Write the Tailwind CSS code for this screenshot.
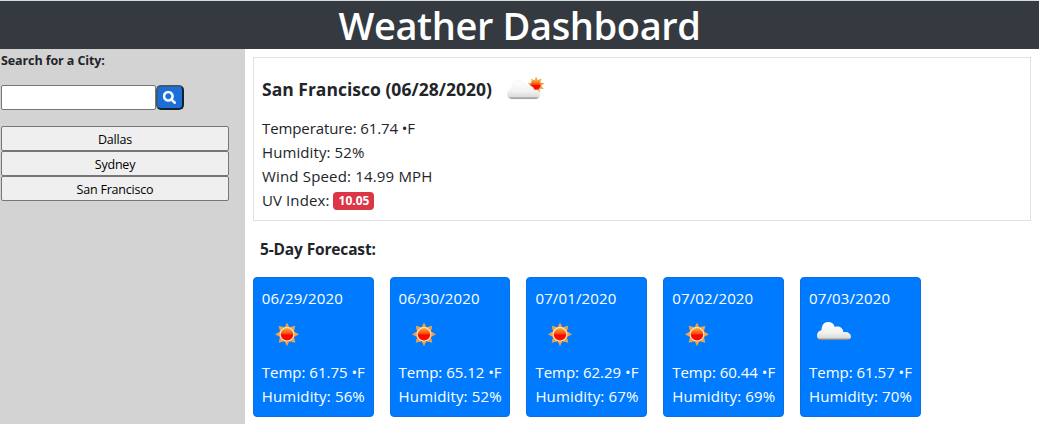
<!DOCTYPE html>
<html lang="en">
<head>
<meta charset="utf-8">
<title>Weather Dashboard</title>
<script src="https://cdn.jsdelivr.net/npm/@tailwindcss/browser@4"></script>
</head>
<body class="h-[432px] overflow-hidden bg-white font-['Open_Sans','Noto_Sans',sans-serif] text-[15px] leading-6 text-[#212529]">
<svg class="absolute size-0">
  <defs>
    <linearGradient id="cloudFill" x1="0" y1="0" x2="0" y2="1"><stop offset="0" stop-color="#fff"/><stop offset=".6" stop-color="#f1f1f1"/><stop offset=".87" stop-color="#dcdcdc"/><stop offset="1" stop-color="#777"/></linearGradient>
    <linearGradient id="sunFill" x1="0" y1="0" x2="0" y2="1"><stop offset="0" stop-color="#ffab36"/><stop offset=".45" stop-color="#fa4a0c"/><stop offset=".55" stop-color="#f50800"/><stop offset="1" stop-color="#ff1000"/></linearGradient>
    <symbol id="sun" viewBox="0 0 50 50">
      <path fill="#eea444" d="M25 12.500l2.300 4.800 6-1.600-1.300 5.900 5 2.600-5 2.800 1.300 5.800-6-1.500L25 36.300l-2.300-5-6 1.500 1.300-5.800-5-2.800 5-2.600-1.300-5.900 6 1.600z"/>
      <circle cx="25" cy="24.300" r="7.300" fill="#ffe9d0"/><circle cx="25" cy="24.300" r="6.200" fill="url(#sunFill)"/>
    </symbol>
    <symbol id="cloud" viewBox="0 0 50 50">
      <path fill="url(#cloudFill)" d="M11.500 30C9 29.500 7.800 27.500 8 25.200 8.200 22.500 10 20.500 12.500 20.300 12.500 15.500 15 12 19.200 12 22.500 12 24.800 13.700 25.800 17 29.500 15.500 34 17.500 34.500 22.200 38 21 42 23.500 42 26.500 42 28.500 40.500 30 38.500 30z"/>
    </symbol>
  </defs>
</svg>
<header class="flex h-[49px] items-center justify-center border-t border-[#d3dce0] bg-[#343a40]">
  <h1 class="text-[38px] leading-[48px] font-semibold tracking-[-0.380px] whitespace-nowrap text-white">Weather Dashboard</h1>
</header>
<div class="flex">
  <aside class="h-[375px] w-[245px] shrink-0 bg-[#d3d3d3] pl-px text-[12.5px]">
    <h2 class="h-[36px] pt-[2px] leading-[20px] font-bold tracking-[-0.1px]">Search for a City:</h2>
    <form class="flex h-[25px]">
      <input class="h-[25px] w-[155px] rounded-[2px] border border-[#767676] bg-white" aria-label="City">
      <button type="button" aria-label="Search" class="flex h-[25px] w-[28px] items-center justify-center rounded-[5px] border-2 border-[#14212e] border-t-[#3d5a79] border-l-[#3d5a79] bg-[#1d6fd8]">
        <svg viewBox="0 0 512 512" class="mr-px size-[13px] fill-white stroke-white stroke-[20]"><path d="M505 442.700 405.300 343c-4.500-4.500-10.600-7-17-7H372c27.600-35.300 44-79.700 44-128C416 93.100 322.900 0 208 0S0 93.100 0 208s93.100 208 208 208c48.300 0 92.700-16.400 128-44v16.300c0 6.400 2.500 12.500 7 17l99.700 99.700c9.400 9.400 24.600 9.400 33.900 0l28.300-28.300c9.400-9.400 9.400-24.600.1-34zM208 336c-70.700 0-128-57.200-128-128 0-70.700 57.200-128 128-128 70.700 0 128 57.200 128 128 0 70.700-57.200 128-128 128z"/></svg>
      </button>
    </form>
    <div class="mt-4 flex w-[228px] flex-col text-black tracking-[-0.2px]">
      <button class="h-[25px] rounded-[2px] border border-[#767676] bg-[#efefef] pt-px">Dallas</button>
      <button class="h-[25px] rounded-[2px] border border-[#767676] bg-[#efefef] pt-px">Sydney</button>
      <button class="h-[25px] rounded-[2px] border border-[#767676] bg-[#efefef] pt-px">San Francisco</button>
    </div>
  </aside>
  <main class="flex-1 px-2 pt-2">
    <section class="h-[164px] border border-[#dee2e6] px-2 pt-[7px]">
      <div class="flex h-[51px] items-center gap-2">
        <h3 class="pb-[3px] text-[17.500px] font-bold tracking-[0.010px] whitespace-nowrap">San Francisco (06/28/2020)</h3>
        <svg class="size-[50px] shrink-0" viewBox="0 0 50 50">
          <path fill="#f2a33c" d="M36 10.500l1.700 3.700 3.800-1.700-1.200 4 4.200.8-3.300 2.500 2.600 3.200-4.100-.2.100 4.100-3.100-2.700-2.700 3.200-1.200-4-4 .3 2.300-3.500-3.200-2.600 4-.8-.8-4 3.600 1.800z"/>
          <circle cx="35.500" cy="19" r="5" fill="url(#sunFill)"/>
          <path fill="url(#cloudFill)" stroke="#ececec" stroke-width=".5" d="M11.500 33C9 32.800 7.200 31 7.200 28.500 7.200 25.500 9 23.300 11.500 23 11.700 18 14.500 14.500 19 14.500 22.700 14.500 25.500 16.500 26.800 20 30.500 19 33.500 20.500 34.300 24 37.500 23.500 40 25.500 40 28.700 40 31.200 38.300 33 35.500 33z"/>
        </svg>
      </div>
      <div>
        <p class="tracking-[-0.1px]">Temperature: 61.74 •F</p>
        <p class="tracking-[0.1px]">Humidity: 52%</p>
        <p class="tracking-[0.170px]">Wind Speed: 14.99 MPH</p>
        <p class="flex items-center tracking-[0.1px]">UV Index:<span class="mt-px ml-1 flex h-[18px] w-[41px] items-center justify-center rounded-[4px] bg-[#dc3545] text-[12px] leading-[18px] font-bold tracking-normal text-white">10.05</span></p>
      </div>
    </section>
    <h3 class="flex h-14 items-center pl-[7px] text-[15.500px] font-bold tracking-[-0.150px]">5-Day Forecast:</h3>
    <section class="-ml-[0.2px] flex gap-4 tracking-[0.150px] whitespace-nowrap text-white">
      <article class="h-[140px] w-[120.800px] rounded-[4px] border border-[#0870e3] bg-[#007bff] p-2"><p>06/29/2020</p><svg class="size-[50px]"><use href="#sun"/></svg><p class="tracking-[-0.010px]">Temp: 61.75 •F</p><p>Humidity: 56%</p></article>
      <article class="h-[140px] w-[120.800px] rounded-[4px] border border-[#0870e3] bg-[#007bff] p-2"><p>06/30/2020</p><svg class="size-[50px]"><use href="#sun"/></svg><p class="tracking-[-0.010px]">Temp: 65.12 •F</p><p>Humidity: 52%</p></article>
      <article class="h-[140px] w-[120.800px] rounded-[4px] border border-[#0870e3] bg-[#007bff] p-2"><p>07/01/2020</p><svg class="size-[50px]"><use href="#sun"/></svg><p class="tracking-[-0.010px]">Temp: 62.29 •F</p><p>Humidity: 67%</p></article>
      <article class="h-[140px] w-[120.800px] rounded-[4px] border border-[#0870e3] bg-[#007bff] p-2"><p>07/02/2020</p><svg class="size-[50px]"><use href="#sun"/></svg><p class="tracking-[-0.010px]">Temp: 60.44 •F</p><p>Humidity: 69%</p></article>
      <article class="h-[140px] w-[120.800px] rounded-[4px] border border-[#0870e3] bg-[#007bff] p-2"><p>07/03/2020</p><svg class="size-[50px]"><use href="#cloud"/></svg><p class="tracking-[-0.010px]">Temp: 61.57 •F</p><p>Humidity: 70%</p></article>
    </section>
  </main>
</div>
</body>
</html>
